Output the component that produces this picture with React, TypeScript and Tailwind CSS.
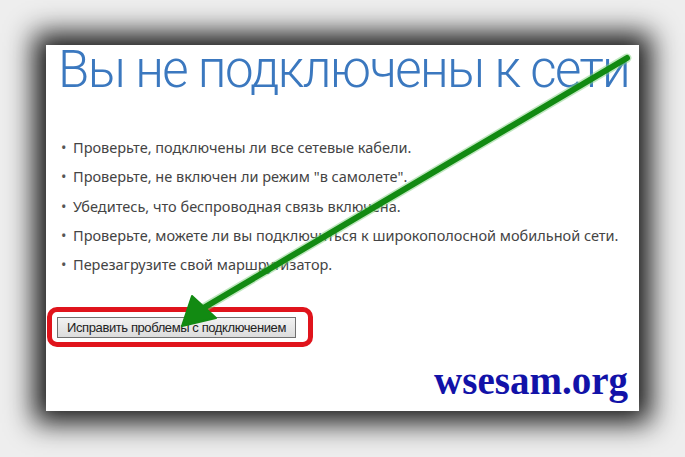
import React from "react";

const items = [
  "Проверьте, подключены ли все сетевые кабели.",
  "Проверьте, не включен ли режим \"в самолете\".",
  "Убедитесь, что беспроводная связь включена.",
  "Проверьте, можете ли вы подключиться к широкополосной мобильной сети.",
  "Перезагрузите свой маршрутизатор.",
];

export default function App() {
  return (
    <div className="relative w-[685px] h-[457px] overflow-hidden bg-[#eeeeee]">
      <div className="absolute left-[46px] top-[45px] w-[593px] h-[366px] bg-white shadow-[0_0_26px_12px_rgba(0,0,0,0.9)] flex flex-col">
        <h1
          className="ml-[12px] mt-[-5px] whitespace-nowrap text-[51px] leading-[60px] font-light text-[#3b78bf] tracking-[-1.6px]"
          style={{ fontFamily: 'Roboto, "Noto Sans", sans-serif' }}
        >
          Вы не подключены к сети
        </h1>
        <ul
          className="mt-[33px] ml-[15px] flex flex-col text-[14.5px] leading-[29.3px] text-[#444444]"
          style={{ fontFamily: '"Noto Sans", "Open Sans", sans-serif' }}
        >
          {items.map((t) => (
            <li key={t} className="flex whitespace-nowrap">
              <span className="w-[12px] text-[#555555]">•</span>
              <span>{t}</span>
            </li>
          ))}
        </ul>
        <div className="mt-[28px] ml-[1px] w-[266px] h-[40px] rounded-[10px] border-[5px] border-[#e0141c] flex items-center pl-[5px]">
          <button
            className="w-[239px] h-[21px] border border-[#707070] bg-gradient-to-b from-[#f2f2f2] to-[#dcdcdc] text-[13px] text-[#222222] tracking-[-0.4px] flex items-center justify-center"
            style={{ fontFamily: '"Liberation Sans", Arial, sans-serif' }}
          >
            Исправить проблемы с подключением
          </button>
        </div>
        <div className="flex-1" />
        <div
          className="self-end mr-[11px] mb-[12px] text-[39px] leading-[36px] font-bold text-[#1212a8]"
          style={{ fontFamily: '"Liberation Serif", "Times New Roman", serif' }}
        >
          wsesam.org
        </div>
      </div>
      <svg className="absolute left-0 top-0" width="685" height="457" viewBox="0 0 685 457">
        <line x1="627" y1="58" x2="200" y2="310" stroke="#7fd07f" strokeWidth="9" strokeLinecap="round" opacity="0.5" />
        <line x1="627" y1="58" x2="200" y2="310" stroke="#128a12" strokeWidth="6" strokeLinecap="round" />
        <polygon points="182,326 192,296 216,318" fill="#128a12" stroke="#128a12" strokeWidth="2" strokeLinejoin="round" />
      </svg>
    </div>
  );
}
